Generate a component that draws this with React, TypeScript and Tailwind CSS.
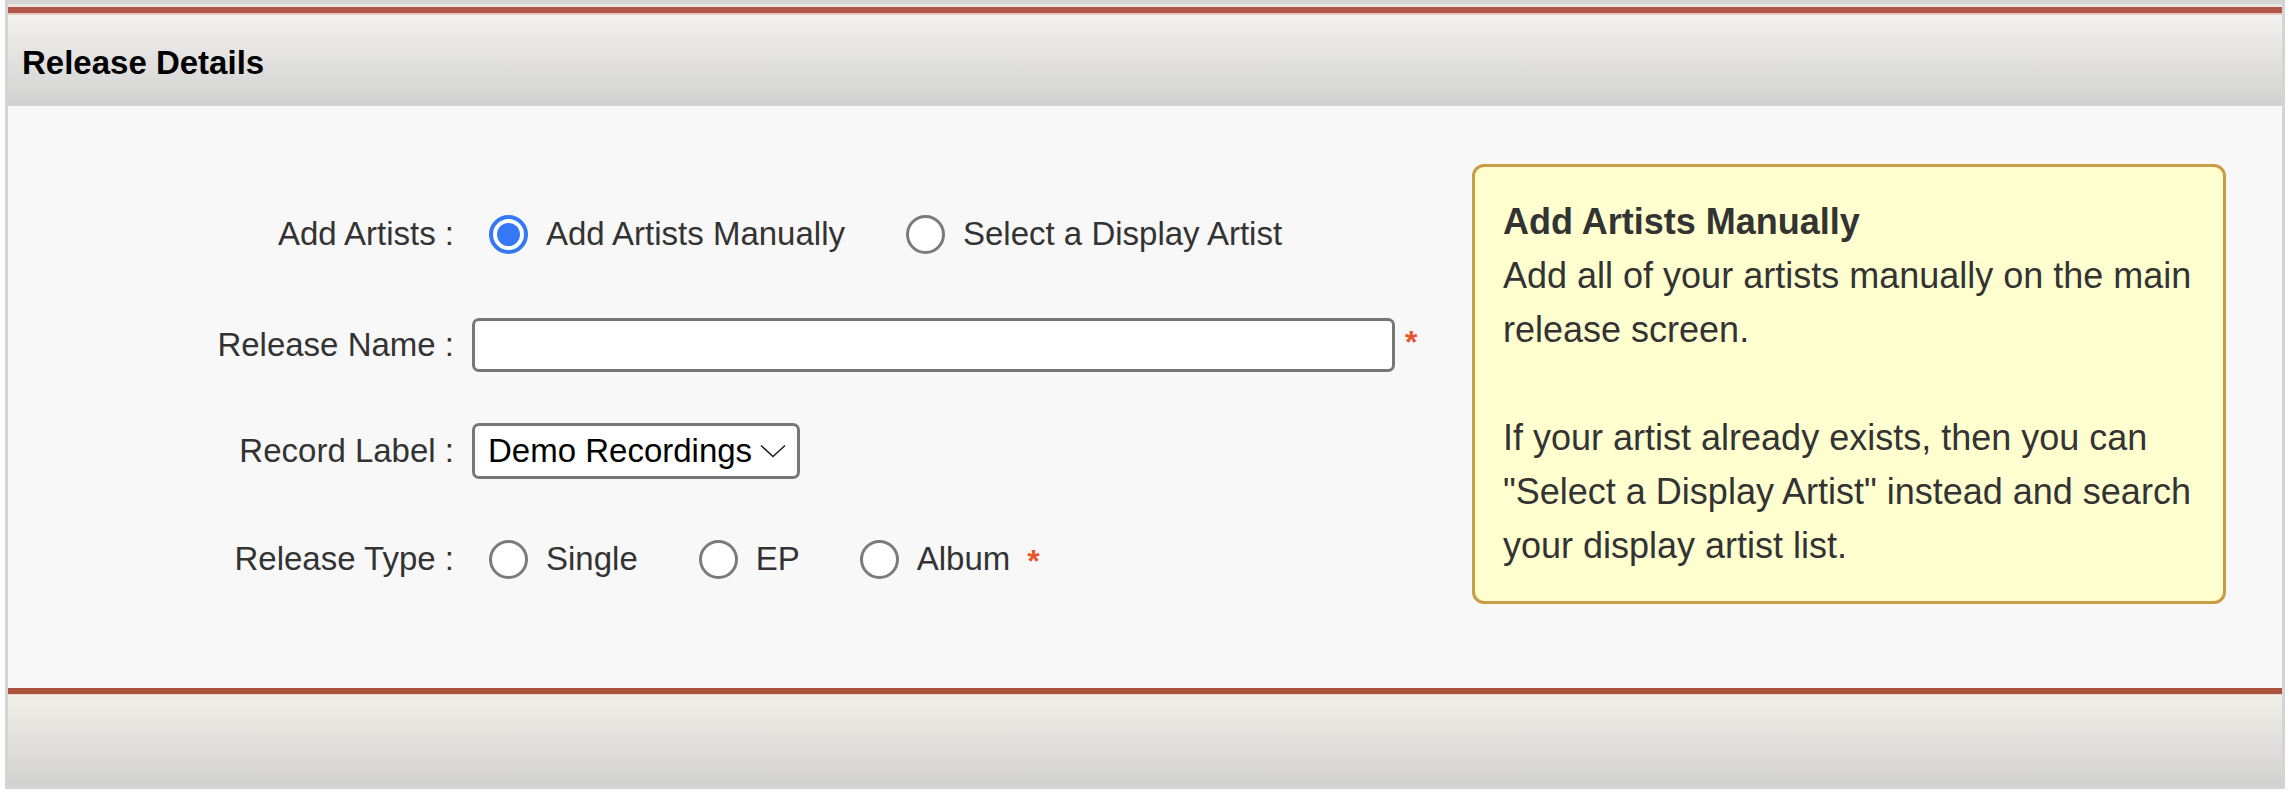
import React from "react";

const font = { fontFamily: '"Liberation Sans", Arial, Helvetica, sans-serif' };

const Radio = ({ checked }: { checked?: boolean }) =>
  checked ? (
    <span className="flex h-[39px] w-[39px] shrink-0 items-center justify-center rounded-full border-[4px] border-[#3478f6] bg-white">
      <span className="h-[23px] w-[23px] rounded-full bg-[#3478f6]" />
    </span>
  ) : (
    <span className="h-[39px] w-[39px] shrink-0 rounded-full border-[3px] border-[#7b7b7b] bg-white" />
  );

const Option = ({ label, checked, first, gap }: { label: string; checked?: boolean; first?: boolean; gap?: string }) => (
  <div className={`flex items-center ${first ? "ml-[17px]" : gap ?? "ml-[61px]"}`}>
    <Radio checked={checked} />
    <span className="ml-[18px]">{label}</span>
  </div>
);

const Star = ({ className }: { className?: string }) => (
  <span className={`font-bold text-[32px] leading-none text-[#e9552c] ${className ?? ""}`}>*</span>
);

const Row = ({ label, className, children }: { label: string; className?: string; children: React.ReactNode }) => (
  <div className={`flex h-[56px] items-center ${className ?? ""}`}>
    <div className="w-[446px] text-right">{label}</div>
    <div className="ml-[18px] flex items-center">{children}</div>
  </div>
);

export default function App() {
  return (
    <div className="h-[796px] w-[2290px] bg-white" style={font}>
      <div className="ml-[5px] w-[2280px] border-x-[3px] border-t-[4px] border-b-[3px] border-[#d4d4d4]">
        {/* header */}
        <div className="h-[3px] bg-[#ece6e2]" />
        <div className="h-[6px] bg-[#b3564a]" />
        <div className="h-[2px] bg-[#e9c7bb]" />
        <div className="flex h-[91px] items-center bg-gradient-to-b from-[#f3f2ee] to-[#d1d1d1] pl-[14px] pt-[4px]">
          <h2 className="text-[33px] font-bold text-black">Release Details</h2>
        </div>

        {/* body */}
        <div className="flex h-[582px] items-start bg-[#f8f8f8] text-[33px] text-[#333]">
          <div className="w-[1464px] pt-[100px]">
            <Row label="Add Artists :">
              <Option first checked label="Add Artists Manually" />
              <Option label="Select a Display Artist" />
            </Row>
            <Row label="Release Name :" className="mt-[55px]">
              <div className="h-[54px] w-[923px] rounded-[7px] border-[3px] border-[#777] bg-white" />
              <Star className="ml-[10px] -mt-[6px]" />
            </Row>
            <Row label="Record Label :" className="mt-[50px]">
              <div className="flex h-[56px] w-[328px] items-center rounded-[7px] border-[3px] border-[#777] bg-white pl-[13px] text-black">
                <span>Demo Recordings</span>
                <svg className="ml-[8px] shrink-0" width="26" height="14" viewBox="0 0 26 14" fill="none">
                  <polyline points="1,1.5 13,12.5 25,1.5" stroke="#222" strokeWidth="1.6" />
                </svg>
              </div>
            </Row>
            <Row label="Release Type :" className="mt-[52px]">
              <Option first label="Single" />
              <Option label="EP" />
              <Option label="Album" gap="ml-[60px]" />
              <Star className="ml-[17px] mt-[4px]" />
            </Row>
          </div>

          <div className="mt-[58px] w-[754px] rounded-[12px] border-[3px] border-[#c99c45] bg-[#ffffd0] px-[28px] py-[28px] text-[36px] leading-[54px] text-[#333]">
            <div className="font-bold">Add Artists Manually</div>
            <div>
              Add all of your artists manually on the main release screen.
              <br />
              <br />
              If your artist already exists, then you can "Select a Display Artist" instead and search your display
              artist list.
            </div>
          </div>
        </div>

        {/* footer */}
        <div className="h-[6px] bg-[#ab523c]" />
        <div className="h-[1px] bg-[#ecd2c4]" />
        <div className="h-[91px] bg-gradient-to-b from-[#f2efe8] to-[#d1d1d1]" />
      </div>
    </div>
  );
}
